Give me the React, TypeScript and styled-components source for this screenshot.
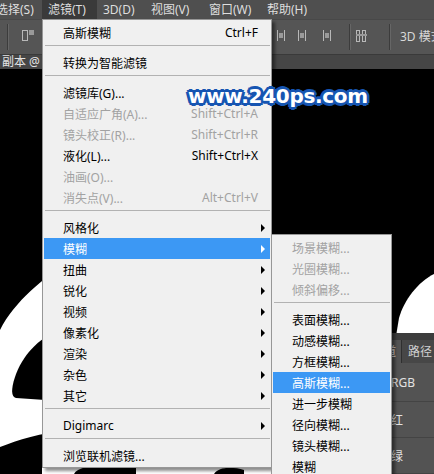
import styled, { createGlobalStyle } from "styled-components";

type Item =
  | { sep: true }
  | {
      sep?: false;
      label: string;
      shortcut?: string;
      disabled?: boolean;
      active?: boolean;
      sub?: boolean;
    };

const filterItems: Item[] = [
  { label: "高斯模糊", shortcut: "Ctrl+F" },
  { sep: true },
  { label: "转换为智能滤镜" },
  { sep: true },
  { label: "滤镜库(G)..." },
  { label: "自适应广角(A)...", shortcut: "Shift+Ctrl+A", disabled: true },
  { label: "镜头校正(R)...", shortcut: "Shift+Ctrl+R", disabled: true },
  { label: "液化(L)...", shortcut: "Shift+Ctrl+X" },
  { label: "油画(O)...", disabled: true },
  { label: "消失点(V)...", shortcut: "Alt+Ctrl+V", disabled: true },
  { sep: true },
  { label: "风格化", sub: true },
  { label: "模糊", sub: true, active: true },
  { label: "扭曲", sub: true },
  { label: "锐化", sub: true },
  { label: "视频", sub: true },
  { label: "像素化", sub: true },
  { label: "渲染", sub: true },
  { label: "杂色", sub: true },
  { label: "其它", sub: true },
  { sep: true },
  { label: "Digimarc", sub: true },
  { sep: true },
  { label: "浏览联机滤镜..." },
];

const blurItems: Item[] = [
  { label: "场景模糊...", disabled: true },
  { label: "光圈模糊...", disabled: true },
  { label: "倾斜偏移...", disabled: true },
  { sep: true },
  { label: "表面模糊..." },
  { label: "动感模糊..." },
  { label: "方框模糊..." },
  { label: "高斯模糊...", active: true },
  { label: "进一步模糊" },
  { label: "径向模糊..." },
  { label: "镜头模糊..." },
  { label: "模糊" },
];

const menuTitles = [
  { label: "选择(S)", w: 52 },
  { label: "滤镜(T)", w: 55, active: true },
  { label: "3D(D)", w: 48 },
  { label: "视图(V)", w: 58 },
  { label: "窗口(W)", w: 58 },
  { label: "帮助(H)", w: 70 },
];

const MenuList = ({ items }: { items: Item[] }) => (
  <>
    {items.map((it, i) =>
      it.sep ? (
        <Separator key={i} />
      ) : (
        <Row key={i} $disabled={it.disabled} $active={it.active}>
          <span>{it.label}</span>
          {it.shortcut && <Shortcut>{it.shortcut}</Shortcut>}
          {it.sub && <Arrow $active={it.active} />}
        </Row>
      )
    )}
  </>
);

const AlignIcon = () => (
  <svg width="12" height="11" viewBox="0 0 12 11">
    <rect x="0.5" y="0.5" width="5" height="10" fill="none" stroke="#b8b8b8" />
    <rect x="7" y="0" width="5" height="5" fill="#9a9a9a" />
  </svg>
);

const DistIcon = () => (
  <svg width="11" height="11" viewBox="0 0 11 11">
    <line x1="1.5" y1="0" x2="1.5" y2="11" stroke="#b8b8b8" />
    <line x1="8.5" y1="0" x2="8.5" y2="11" stroke="#b8b8b8" />
    <rect x="3" y="3" width="4" height="5" fill="#9a9a9a" />
  </svg>
);

const ColsIcon = () => (
  <svg width="11" height="12" viewBox="0 0 11 12">
    <rect x="0.5" y="0.5" width="3" height="11" fill="none" stroke="#b8b8b8" />
    <rect x="6.5" y="0.5" width="3" height="11" fill="none" stroke="#b8b8b8" />
    <rect x="0" y="4" width="11" height="2" fill="#9a9a9a" />
  </svg>
);

const App = () => {
  return (
    <Page>
      <GlobalStyle />
      <MenuBar>
        {menuTitles.map((m) => (
          <MenuTitle key={m.label} $w={m.w} $active={m.active}>
            {m.label}
          </MenuTitle>
        ))}
      </MenuBar>
      <Toolbar>
        <ToolSep $ml={7} />
        <ToolSlot $ml={14}>
          <AlignIcon />
        </ToolSlot>
        <ToolSlot $ml={242}>
          <DistIcon />
        </ToolSlot>
        <ToolSlot $ml={10}>
          <DistIcon />
        </ToolSlot>
        <ToolSlot $ml={14}>
          <DistIcon />
        </ToolSlot>
        <ToolSep $ml={16} />
        <ToolSlot $ml={6}>
          <ColsIcon />
        </ToolSlot>
        <ToolSep $ml={22} />
        <ToolText>3D 模式:</ToolText>
      </Toolbar>
      <DocTab>副本 @ 66.7%(RGB/8)</DocTab>
      <Canvas>
        <Artwork viewBox="0 69 434 405" preserveAspectRatio="none">
          <path
            d="M70,262 C45,276 14,302 0,330 L0,447 C18,440 40,433 70,430 Z"
            fill="#fff"
          />
          <path
            d="M60,330 C38,338 22,356 15,377 C11,389 11,397 16,398 L60,401 Z"
            fill="#000"
          />
          <rect x="42" y="460" width="240" height="14" fill="#fff" />
          <path d="M74,474 C78,466 100,463 136,466 L136,474 Z" fill="#000" />
          <path d="M214,474 C218,467 232,466 244,470 L244,474 Z" fill="#000" />
          <path
            d="M434,274 C418,282 404,300 399,318 L396,336 L434,336 Z"
            fill="#fff"
          />
        </Artwork>
        <Panel>
          <TabBar>
            <Tab $active>通道</Tab>
            <Tab>路径</Tab>
          </TabBar>
          <Channel $h={39}>RGB</Channel>
          <Channel $h={36}>红</Channel>
          <Channel $h={36}>绿</Channel>
        </Panel>
      </Canvas>
      <FilterMenu>
        <MenuList items={filterItems} />
      </FilterMenu>
      <BlurMenu>
        <MenuList items={blurItems} />
      </BlurMenu>
      <Watermark>www.240ps.com</Watermark>
    </Page>
  );
};

const GlobalStyle = createGlobalStyle`
  html, body {
    margin: 0;
    padding: 0;
    background: #000;
  }
  body {
    font-family: "Noto Sans", "Noto Sans CJK SC", sans-serif;
  }
`;

const Page = styled.div`
  position: relative;
  width: 434px;
  height: 474px;
  overflow: hidden;
  display: flex;
  flex-direction: column;
  background: #000;
`;

const MenuBar = styled.div`
  height: 19px;
  display: flex;
  background: #4f4f4f;
  white-space: nowrap;
  & > :first-child {
    margin-left: -10px;
  }
`;

const MenuTitle = styled.div<{ $w: number; $active?: boolean }>`
  flex: none;
  width: ${(p) => p.$w}px;
  padding-left: 6px;
  box-sizing: border-box;
  font-size: 12px;
  line-height: 19px;
  color: #dedede;
  background: ${(p) => (p.$active ? "#3a3a3a" : "transparent")};
`;

const Toolbar = styled.div`
  height: 35px;
  display: flex;
  align-items: center;
  background: #555555;
  border-top: 1px solid #484848;
  box-sizing: border-box;
  white-space: nowrap;
`;

const ToolSep = styled.div<{ $ml: number }>`
  flex: none;
  width: 1px;
  height: 26px;
  margin-left: ${(p) => p.$ml}px;
  background: #3c3c3c;
  box-shadow: 1px 0 0 #666;
`;

const ToolSlot = styled.div<{ $ml: number }>`
  flex: none;
  display: flex;
  margin-left: ${(p) => p.$ml}px;
  margin-top: -3px;
`;

const ToolText = styled.div`
  margin-left: 10px;
  margin-top: -3px;
  font-size: 12px;
  color: #d8d8d8;
`;

const DocTab = styled.div`
  height: 14px;
  padding-left: 2px;
  background: #464646;
  border-top: 1px solid #3a3a3a;
  font-size: 12px;
  line-height: 14px;
  color: #e4e4e4;
  white-space: nowrap;
  overflow: hidden;
`;

const Canvas = styled.div`
  position: relative;
  flex: 1;
  background: #000;
  overflow: hidden;
`;

const Artwork = styled.svg`
  display: block;
  width: 100%;
  height: 100%;
`;

const Watermark = styled.div`
  position: absolute;
  z-index: 5;
  left: 188px;
  top: 86px;
  font-family: "DejaVu Sans", sans-serif;
  font-weight: bold;
  font-size: 20px;
  line-height: 20px;
  letter-spacing: -0.3px;
  color: #fff;
  white-space: nowrap;
  text-shadow: 2px 0 0 #1655b2, -2px 0 0 #1655b2, 0 2px 0 #1655b2,
    0 -2px 0 #1655b2, 2px 2px 0 #1655b2, -2px -2px 0 #1655b2,
    2px -2px 0 #1655b2, -2px 2px 0 #1655b2, 3px 0 0 #1655b2,
    -3px 0 0 #1655b2, 0 3px 0 #1655b2, 0 -3px 0 #1655b2;
`;

const Panel = styled.div`
  position: absolute;
  left: 366px;
  top: 264px;
  right: 0;
  bottom: 0;
  display: flex;
  flex-direction: column;
  background: #535353;
  color: #e2e2e2;
  font-size: 12px;
`;

const TabBar = styled.div`
  height: 30px;
  padding-top: 7px;
  box-sizing: border-box;
  display: flex;
  background: #3c3c3c;
`;

const Tab = styled.div<{ $active?: boolean }>`
  flex: none;
  padding: 0 5px 0 6px;
  line-height: 23px;
  background: ${(p) => (p.$active ? "#535353" : "#474747")};
  border-right: 1px solid #2f2f2f;
  color: ${(p) => (p.$active ? "#e8e8e8" : "#cfcfcf")};
`;

const Channel = styled.div<{ $h: number }>`
  flex: none;
  height: ${(p) => p.$h}px;
  display: flex;
  align-items: center;
  padding-left: 25px;
  border-bottom: 1px solid #444;
  box-sizing: border-box;
`;

const MenuBox = styled.div`
  position: absolute;
  background: #f0f0f0;
  border: 1px solid #979797;
  box-shadow: 3px 3px 3px rgba(0, 0, 0, 0.45);
  padding: 2px 0 1px;
  font-size: 12px;
  white-space: nowrap;
`;

const FilterMenu = styled(MenuBox)`
  left: 42px;
  top: 19px;
  width: 230px;
  box-sizing: border-box;
`;

const BlurMenu = styled(MenuBox)`
  left: 271px;
  top: 234px;
  width: 121px;
  height: 260px;
  box-sizing: border-box;
`;

const Row = styled.div<{ $disabled?: boolean; $active?: boolean }>`
  height: 21px;
  margin: 0 1px;
  padding: 0 12px 0 19px;
  display: flex;
  align-items: center;
  background: ${(p) => (p.$active ? "#3c98f4" : "transparent")};
  color: ${(p) => (p.$active ? "#fff" : p.$disabled ? "#a2a2a2" : "#000")};
`;

const Shortcut = styled.span`
  margin-left: auto;
`;

const Arrow = styled.span<{ $active?: boolean }>`
  margin-left: auto;
  margin-right: -7px;
  width: 0;
  height: 0;
  border-top: 4px solid transparent;
  border-bottom: 4px solid transparent;
  border-left: 4px solid ${(p) => (p.$active ? "#fff" : "#000")};
`;

const Separator = styled.div`
  height: 1px;
  margin: 2px 1px 6px 2px;
  background: #b2b2b2;
`;

export default App;
